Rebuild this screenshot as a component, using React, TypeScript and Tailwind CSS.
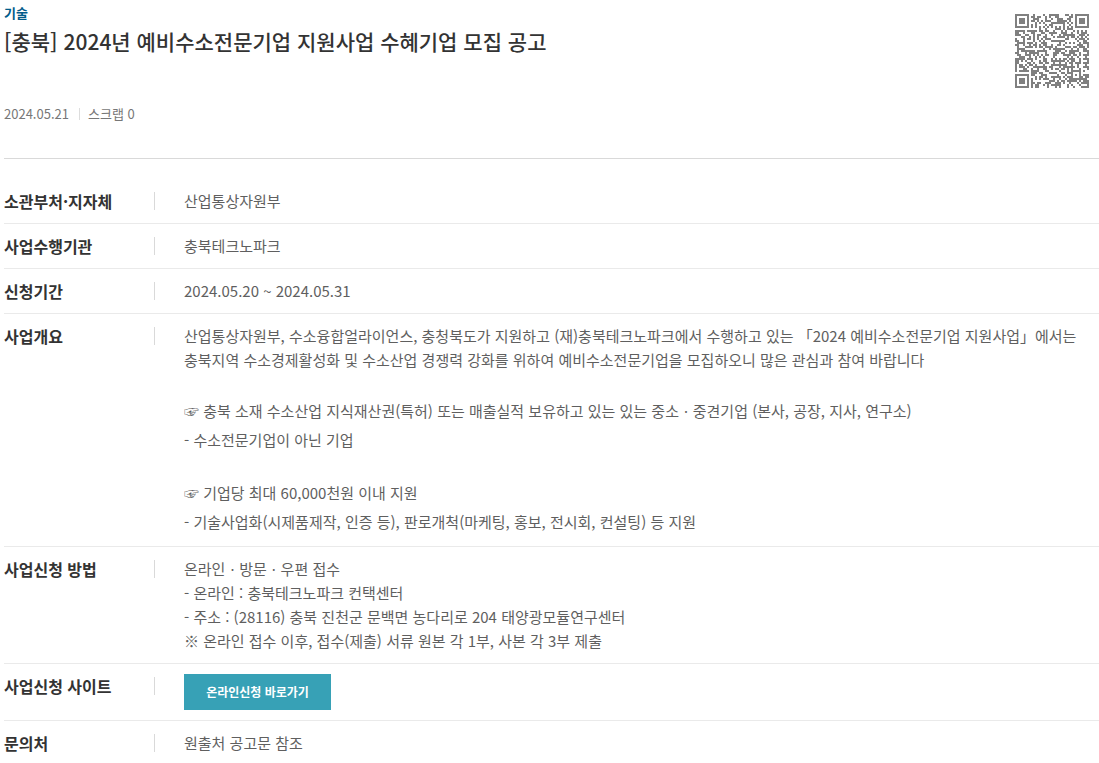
import type { ReactNode } from 'react';

const NOTICE_URL =
  'https://www.bizinfo.go.kr/web/lay1/bbs/S1T122C128/AS/74/view.do?pblancId=PBLN_000000000097657';

// QR version 5, error correction level L, mask 2
const SIZE = 37;
const DATA_LENGTH = 108;
const EC_LENGTH = 26;
const MASK = 2;

const multiply = (x: number, y: number) => {
  let z = 0;
  for (let i = 7; i >= 0; i--) {
    z = (z << 1) ^ ((z >>> 7) * 0x11d);
    z ^= ((y >>> i) & 1) * x;
  }
  return z;
};

const getErrorCorrection = (data: number[]) => {
  const divisor = Array(EC_LENGTH).fill(0);
  divisor[EC_LENGTH - 1] = 1;
  let root = 1;
  for (let i = 0; i < EC_LENGTH; i++) {
    for (let j = 0; j < EC_LENGTH; j++) {
      divisor[j] = multiply(divisor[j], root);
      if (j + 1 < EC_LENGTH) divisor[j] ^= divisor[j + 1];
    }
    root = multiply(root, 2);
  }
  const result = Array(EC_LENGTH).fill(0);
  data.forEach((value) => {
    const factor = value ^ result.shift();
    result.push(0);
    divisor.forEach((d, i) => (result[i] ^= multiply(d, factor)));
  });
  return result;
};

const createQr = (text: string) => {
  const bits: number[] = [];
  const push = (value: number, length: number) => {
    for (let i = length - 1; i >= 0; i--) bits.push((value >>> i) & 1);
  };
  push(4, 4);
  push(text.length, 8);
  for (const char of text) push(char.charCodeAt(0), 8);
  push(0, 4);
  for (let pad = 0xec; bits.length < DATA_LENGTH * 8; pad ^= 0xfd) push(pad, 8);
  const data: number[] = [];
  for (let i = 0; i < bits.length; i += 8) {
    data.push(parseInt(bits.slice(i, i + 8).join(''), 2));
  }
  getErrorCorrection(data).forEach((value) => push(value, 8));

  const grid: (boolean | null)[][] = Array.from({ length: SIZE }, () =>
    Array(SIZE).fill(null),
  );
  const set = (x: number, y: number, dark: boolean) => {
    if (grid[y] && x >= 0 && x < SIZE) grid[y][x] = dark;
  };
  // timing lines
  for (let i = 0; i < SIZE; i++) {
    set(6, i, i % 2 === 0);
    set(i, 6, i % 2 === 0);
  }
  // finder squares
  [
    [3, 3],
    [SIZE - 4, 3],
    [3, SIZE - 4],
  ].forEach(([cx, cy]) => {
    for (let dy = -4; dy <= 4; dy++) {
      for (let dx = -4; dx <= 4; dx++) {
        const ring = Math.max(Math.abs(dx), Math.abs(dy));
        set(cx + dx, cy + dy, ring !== 2 && ring !== 4);
      }
    }
  });
  // alignment square
  for (let dy = -2; dy <= 2; dy++) {
    for (let dx = -2; dx <= 2; dx++) {
      set(30 + dx, 30 + dy, Math.max(Math.abs(dx), Math.abs(dy)) !== 1);
    }
  }
  // format bits
  const format = (1 << 3) | MASK;
  let rem = format;
  for (let i = 0; i < 10; i++) rem = (rem << 1) ^ ((rem >>> 9) * 0x537);
  const code = ((format << 10) | rem) ^ 0x5412;
  const bit = (i: number) => ((code >>> i) & 1) === 1;
  for (let i = 0; i < 6; i++) set(8, i, bit(i));
  set(8, 7, bit(6));
  set(8, 8, bit(7));
  set(7, 8, bit(8));
  for (let i = 9; i < 15; i++) set(14 - i, 8, bit(i));
  for (let i = 0; i < 8; i++) set(SIZE - 1 - i, 8, bit(i));
  for (let i = 8; i < 15; i++) set(8, SIZE - 15 + i, bit(i));
  set(8, SIZE - 8, true);

  let index = 0;
  for (let right = SIZE - 1; right >= 1; right -= 2) {
    if (right === 6) right = 5;
    for (let step = 0; step < SIZE; step++) {
      for (let j = 0; j < 2; j++) {
        const x = right - j;
        const y = ((right + 1) & 2) === 0 ? SIZE - 1 - step : step;
        if (grid[y][x] === null) {
          grid[y][x] = (bits[index++] === 1) !== (x % 3 === 0);
        }
      }
    }
  }
  return grid;
};

const QrCode = ({ value }: { value: string }) => {
  const path = createQr(value)
    .map((row, y) =>
      row.map((dark, x) => (dark ? `M${x} ${y}h1v1h-1z` : '')).join(''),
    )
    .join('');
  return (
    <svg
      role="img"
      aria-label="QR 코드"
      viewBox="0 0 37 37"
      shapeRendering="crispEdges"
      className="size-[74px] shrink-0 text-[#808080]"
    >
      <path d={path} fill="currentColor" />
    </svg>
  );
};

interface RowProps {
  label: string;
  children: ReactNode;
}

const Row = ({ label, children }: RowProps) => {
  return (
    <div className="flex border-b border-[#eaeaea] py-2.5 last:border-b-0 last:pb-0">
      <dt className="flex h-6 w-[151px] shrink-0 items-center justify-between text-[16px] leading-6 font-bold text-[#333]">
        {label}
        <span className="h-[18px] w-px bg-[#d9d9d9]" />
      </dt>
      <dd className="min-w-0 flex-1 pl-[29px] text-[15px] leading-6 text-[#5f5f5f]">
        {children}
      </dd>
    </div>
  );
};

const App = () => {
  return (
    <main
      lang="ko"
      className="bg-white pl-1 font-['Noto_Sans_CJK_KR','Noto_Sans',sans-serif]"
    >
      <header className="flex items-start justify-between border-b border-[#d9d9d9] pr-2.5 pb-[34px]">
        <div className="pt-[3px]">
          <p className="text-[13px] leading-5 font-bold text-[#005b8a]">기술</p>
          <h1 className="pt-0.5 text-[21px] leading-8 font-medium text-[#333]">
            [충북] 2024년 예비수소전문기업 지원사업 수혜기업 모집 공고
          </h1>
          <ul className="flex items-center pt-[47px] text-[13px] leading-5 text-[#777]">
            <li>2024.05.21</li>
            <li className="ml-2.5 flex items-center gap-2">
              <span className="h-3 w-px bg-[#ddd]" />
              스크랩 0
            </li>
          </ul>
        </div>
        <div className="pt-3.5">
          <QrCode value={NOTICE_URL} />
        </div>
      </header>
      <dl className="pt-5">
        <Row label="소관부처·지자체">산업통상자원부</Row>
        <Row label="사업수행기관">충북테크노파크</Row>
        <Row label="신청기간">2024.05.20 ~ 2024.05.31</Row>
        <Row label="사업개요">
          <p>
            산업통상자원부, 수소융합얼라이언스, 충청북도가 지원하고
            (재)충북테크노파크에서 수행하고 있는 「2024 예비수소전문기업
            지원사업」에서는
            <br />
            충북지역 수소경제활성화 및 수소산업 경쟁력 강화를 위하여
            예비수소전문기업을 모집하오니 많은 관심과 참여 바랍니다
          </p>
          <div className="pt-6 leading-[29px]">
            <p>
              ☞ 충북 소재 수소산업 지식재산권(특허) 또는 매출실적 보유하고 있는
              있는 중소ㆍ중견기업 (본사, 공장, 지사, 연구소)
            </p>
            <p>- 수소전문기업이 아닌 기업</p>
          </div>
          <div className="pt-6 leading-[29px]">
            <p>☞ 기업당 최대 60,000천원 이내 지원</p>
            <p>
              - 기술사업화(시제품제작, 인증 등), 판로개척(마케팅, 홍보, 전시회,
              컨설팅) 등 지원
            </p>
          </div>
        </Row>
        <Row label="사업신청 방법">
          <p>온라인ㆍ방문ㆍ우편 접수</p>
          <p>- 온라인 : 충북테크노파크 컨택센터</p>
          <p>- 주소 : (28116) 충북 진천군 문백면 농다리로 204 태양광모듈연구센터</p>
          <p>※ 온라인 접수 이후, 접수(제출) 서류 원본 각 1부, 사본 각 3부 제출</p>
        </Row>
        <Row label="사업신청 사이트">
          <a
            href="#apply"
            className="flex h-9 w-[147px] items-center justify-center bg-[#37a1b6] text-[12px] font-bold text-white"
          >
            온라인신청 바로가기
          </a>
        </Row>
        <Row label="문의처">원출처 공고문 참조</Row>
      </dl>
    </main>
  );
};

export default App;
